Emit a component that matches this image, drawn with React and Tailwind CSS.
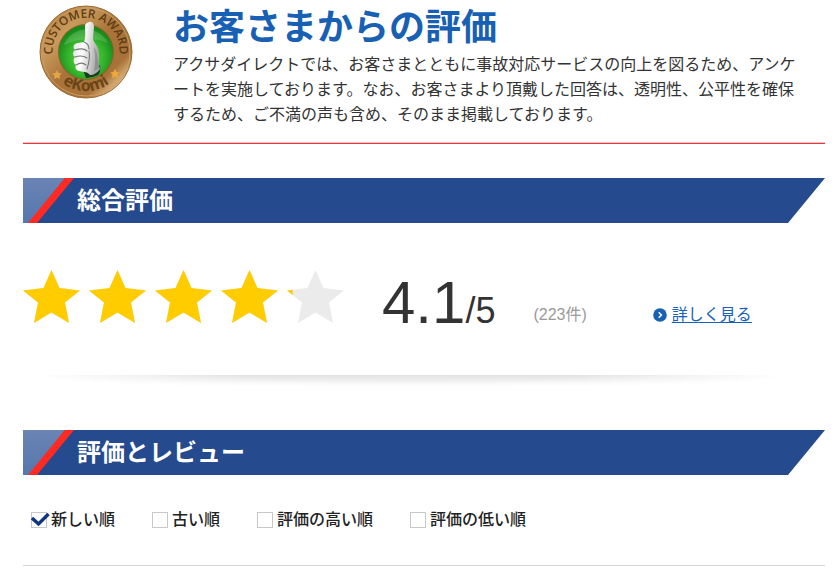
import { useState } from 'react'

const sortOptions = [
  { id: 'newest', label: '新しい順' },
  { id: 'oldest', label: '古い順' },
  { id: 'highest', label: '評価の高い順' },
  { id: 'lowest', label: '評価の低い順' },
]

const STAR = '28.5,0 36.5,18 57,20.5 42,32.5 46,53 28.5,42.5 11,53 15,32.5 0,20.5 20.5,18'

function AwardSeal() {
  return (
    <svg viewBox="0 0 94 94" className="size-[94px] shrink-0" role="img" aria-label="eKomi Customer Award">
      <defs>
        <linearGradient id="bronze" x1="0" y1="0" x2="1" y2="1">
          <stop offset="0" stopColor="#a87338" />
          <stop offset="0.28" stopColor="#c99a5c" />
          <stop offset="0.5" stopColor="#a9743a" />
          <stop offset="0.74" stopColor="#a87137" />
          <stop offset="0.86" stopColor="#e3bd85" />
          <stop offset="1" stopColor="#a06c33" />
        </linearGradient>
        <radialGradient id="green" cx="0.5" cy="0.6" r="0.55">
          <stop offset="0" stopColor="#5fdc48" />
          <stop offset="0.6" stopColor="#36b52c" />
          <stop offset="1" stopColor="#168a1b" />
        </radialGradient>
        <linearGradient id="hand" x1="0" y1="0" x2="1" y2="0.3">
          <stop offset="0" stopColor="#d9d9d9" />
          <stop offset="0.45" stopColor="#ffffff" />
          <stop offset="1" stopColor="#a9a9a9" />
        </linearGradient>
        <path id="arcTop" d="M 14 52 A 33.5 33.5 0 1 1 80 52" />
        <path id="arcBottom" d="M 8 55 A 40 40 0 0 0 86 55" />
      </defs>
      <circle cx="47" cy="47" r="46" fill="url(#bronze)" stroke="#9a6a34" strokeWidth="1" />
      <circle cx="47" cy="47" r="44" fill="none" stroke="#c89c62" strokeWidth="1" />
      <circle cx="47" cy="47" r="28" fill="#8f6029" />
      <circle cx="47" cy="47" r="27" fill="url(#green)" />
      <path d="M25 40 A24 24 0 0 1 69 38 Q48 29 25 40Z" fill="#fff" opacity="0.16" />
      <path d="M44 65 L61 60 Q62 67 59 70 Q53 73 47 73Z" fill="#1c3b20" />
      <path
        d="M50 17 C53 16 55 18 55 22 L54 33 C54 36 56 38 58 41 C60 44 60 48 60 52 C60 58 60 61 61 64 C58 68 55 70 51 70 C48 66 43 67 40 66 C36 65 36 61 37 60 C34 58 34 54 36 52 C33 50 34 46 36 45 C33 42 35 38 39 38 L45 37 C47 32 46 26 46 21 C46 19 48 17.5 50 17Z"
        fill="url(#hand)"
      />
      <g fill="none" stroke="#777" strokeWidth="1.1" strokeLinecap="round">
        <path d="M36 45 C42 43 46 44 48 46" />
        <path d="M36 52 C42 50 45 51 48 53" />
        <path d="M37 60 C42 57 44 58 47 60" />
        <path d="M45 37 C48 38 50 41 50 44" />
        <path d="M50 46 C51 51 50 58 48 64" />
      </g>
      <path d="M55 42 C59 47 58 55 61 63 L55 66 C57 58 56 49 55 42Z" fill="#777" opacity="0.5" />
      <path d="M18 65 l1.5 3 3.3 .4 -2.4 2.3 .6 3.3 -3 -1.6 -3 1.6 .6 -3.3 -2.4 -2.3 3.3 -.4z" fill="#e2a648" />
      <path d="M76 64 l1.5 3 3.3 .4 -2.4 2.3 .6 3.3 -3 -1.6 -3 1.6 .6 -3.3 -2.4 -2.3 3.3 -.4z" fill="#eda93b" />
      <text className="font-['Open_Sans',sans-serif] text-[12px] font-semibold" fill="#5f3d14" textAnchor="middle">
        <textPath href="#arcTop" startOffset="50%">CUSTOMER AWARD</textPath>
      </text>
      <text className="font-['Open_Sans',sans-serif] text-[16px] font-bold" fill="#6b4518" textAnchor="middle">
        <textPath href="#arcBottom" startOffset="50%">eKomi</textPath>
      </text>
    </svg>
  )
}

function SectionBanner({ children }) {
  return (
    <div className="relative flex h-[45px] items-center bg-[#254a8e] pl-[54px] [clip-path:polygon(0_0,100%_0,calc(100%-37px)_100%,0_100%)]">
      <svg viewBox="0 0 52 45" className="absolute left-0 top-0 h-[45px] w-[52px]" aria-hidden="true">
        <defs>
          <linearGradient id="corner" x1="0" y1="0" x2="0" y2="1">
            <stop offset="0" stopColor="#6b84b4" />
            <stop offset="1" stopColor="#5577ad" />
          </linearGradient>
        </defs>
        <polygon points="0,0 42,0 6,45 0,45" fill="url(#corner)" />
        <polygon points="42,0 51,0 14,45 5,45" fill="#ff2a22" />
      </svg>
      <h2 className="text-2xl font-bold text-white">{children}</h2>
    </div>
  )
}

function Stars({ rating }) {
  return (
    <div className="flex gap-[9px]" role="img" aria-label={`${rating} / 5`}>
      {[0, 1, 2, 3, 4].map(i => {
        const fill = Math.max(0, Math.min(1, rating - i))
        return (
          <svg key={i} viewBox="0 0 57 53" className="h-[53px] w-[57px]">
            <clipPath id={`fill-${i}`}>
              <rect width={57 * fill} height="53" />
            </clipPath>
            <polygon points={STAR} fill="#ebebeb" />
            <polygon points={STAR} fill="#ffcc00" clipPath={`url(#fill-${i})`} />
          </svg>
        )
      })}
    </div>
  )
}

function SortOption({ option, checked, onChange }) {
  return (
    <label className="relative flex cursor-pointer items-center gap-1">
      <input
        type="checkbox"
        checked={checked}
        onChange={onChange}
        className="size-4 shrink-0 appearance-none border border-[#c8c8c8] bg-white"
      />
      {checked && (
        <svg viewBox="0 0 19 16" className="pointer-events-none absolute left-0 h-4 w-[19px]" aria-hidden="true">
          <path d="M1 6 L7.5 12 L17.5 2" fill="none" stroke="#12357f" strokeWidth="3.4" />
        </svg>
      )}
      <span>{option.label}</span>
    </label>
  )
}

export default function App() {
  const [sort, setSort] = useState('newest')

  return (
    <main lang="ja" className="bg-white pb-3 pl-[23px] pr-[15px] font-['Liberation_Sans','Noto_Sans_CJK_JP',sans-serif] text-[#333]">
      <header className="flex px-4 pb-[15px] pt-[5px]">
        <AwardSeal />
        <div className="flex-1 pl-10">
          <h1 className="text-4xl/[45px] font-bold text-[#1860b4]">お客さまからの評価</h1>
          <p className="break-all pt-0.5 text-base/[25px] [line-break:loose]">
            アクサダイレクトでは、お客さまとともに事故対応サービスの向上を図るため、アンケートを実施しております。なお、お客さまより頂戴した回答は、透明性、公平性を確保するため、ご不満の声も含め、そのまま掲載しております。
          </p>
        </div>
      </header>
      <hr className="h-0.5 border-0 border-t border-[#fbc4c4] bg-[#e8343c]" />

      <section className="pt-[34px]">
        <SectionBanner>総合評価</SectionBanner>
        <div className="flex h-[152px] items-baseline pt-[47px]">
          <Stars rating={4.1} />
          <p className="pl-[38px] text-4xl/9">
            <span className="text-[60px]/9">4.1</span>/5
          </p>
          <div className="flex items-center self-start pt-[33px] text-base">
            <p className="pl-[38px] text-[#999]">(223件)</p>
            <a href="#details" className="ml-[66px] flex items-center gap-[5px] text-[#1860b4]">
              <svg viewBox="0 0 14 14" className="size-[14px]" aria-hidden="true">
                <circle cx="7" cy="7" r="6.8" fill="#1860b4" />
                <path d="M5.7 4.3 L8.4 7 L5.7 9.7" fill="none" stroke="#fff" strokeWidth="1.5" />
              </svg>
              <span className="underline underline-offset-2">詳しく見る</span>
            </a>
          </div>
        </div>
        <div className="ml-3 mr-10 h-3 bg-linear-to-b from-[#e2e2e2] to-white [mask-image:radial-gradient(50%_130%_at_50%_0%,#000_45%,transparent)]" />
      </section>

      <section className="pt-[43px]">
        <SectionBanner>評価とレビュー</SectionBanner>
        <div className="flex flex-wrap gap-x-[37px] border-b border-[#d8d8d8] px-2 pb-[33px] pt-[33px] font-medium text-[#222]">
          {sortOptions.map(option => (
            <SortOption
              key={option.id}
              option={option}
              checked={sort === option.id}
              onChange={() => setSort(option.id)}
            />
          ))}
        </div>
      </section>
    </main>
  )
}
